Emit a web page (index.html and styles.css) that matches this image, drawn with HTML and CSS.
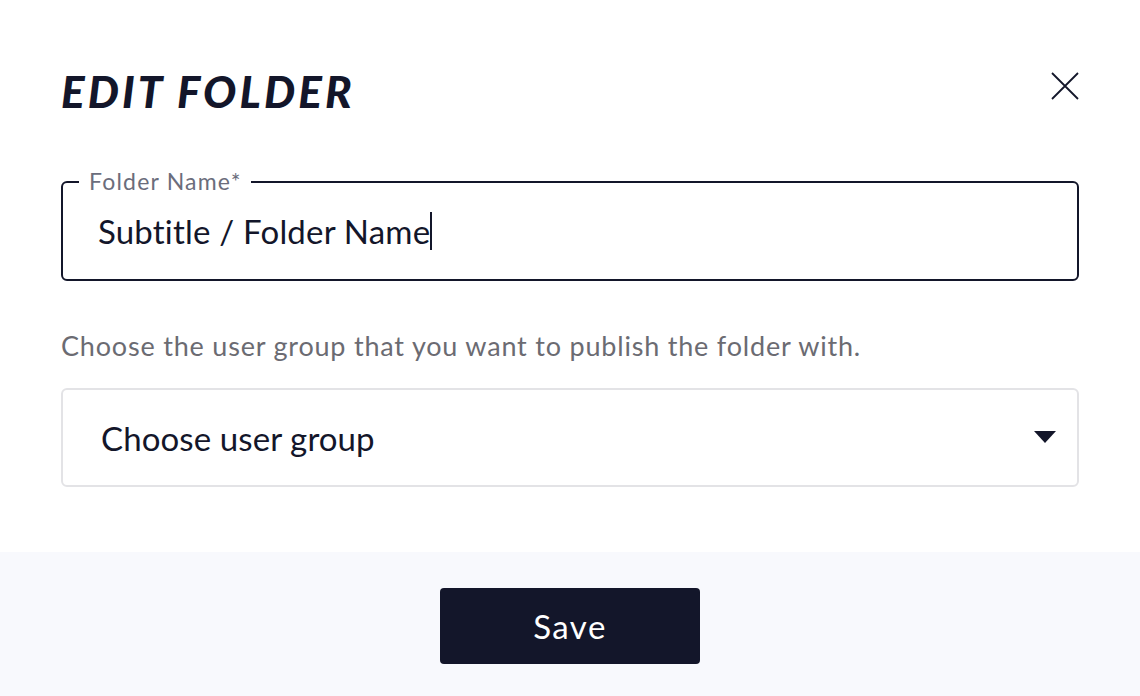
FILE: index.html
```html
<!DOCTYPE html>
<html lang="en">
<head>
<meta charset="utf-8">
<title>Edit Folder</title>
<link rel="stylesheet" href="styles.css">
</head>
<body>
<div class="dialog">
  <div class="content">
    <header class="header">
      <h1 class="title">EDIT FOLDER</h1>
      <button class="close" aria-label="Close">
        <svg width="28" height="28" viewBox="0 0 28 28"><path d="M1 1 L27 27 M27 1 L1 27" stroke="#13162a" stroke-width="1.8" fill="none"/></svg>
      </button>
    </header>
    <div class="field">
      <span class="field-label">Folder Name*</span>
      <div class="field-value">Subtitle / Folder Name<span class="caret"></span></div>
    </div>
    <p class="helper">Choose the user group that you want to publish the folder with.</p>
    <div class="select">
      <span class="select-text">Choose user group</span>
      <svg class="arrow" width="22" height="12" viewBox="0 0 22 12"><path d="M0 0 H22 L11 12 Z" fill="#13162a"/></svg>
    </div>
  </div>
  <footer class="footer">
    <button class="save">Save</button>
  </footer>
</div>
</body>
</html>
```
FILE: styles.css
```css
* { box-sizing: border-box; }
html, body { margin: 0; padding: 0; background: #fff; }
body { font-family: "Lato", "Noto Sans", sans-serif; color: #13162a; }
.dialog { width: 1140px; height: 696px; display: flex; flex-direction: column; }
.content { flex: 1; padding: 0 61px; }
.header { display: flex; justify-content: space-between; align-items: center; padding-top: 60px; height: 122px; }
.title { margin: 0; font-size: 44px; line-height: 62px; font-weight: 900; font-style: italic; letter-spacing: 3.1px; color: #13162a; }
.close { background: none; border: 0; padding: 0; width: 28px; height: 28px; display: flex; align-items: center; justify-content: center; margin-top: -10px; }
.field { position: relative; margin-top: 59px; height: 100px; border: 2px solid #13162a; border-radius: 6px; display: flex; align-items: center; padding-left: 35px; }
.field-label { position: absolute; left: 16px; top: -15px; background: #fff; padding: 0 9px 0 10px; font-size: 23px; line-height: 26px; letter-spacing: 1.2px; color: #6b6d7c; }
.field-value { font-size: 33px; line-height: 40px; letter-spacing: 0.2px; color: #13162a; display: flex; align-items: center; }
.caret { display: inline-block; width: 2px; height: 38px; background: #13162a; margin-left: 0; }
.helper { margin: 49px 0 0; font-size: 27px; line-height: 32px; letter-spacing: 0.8px; color: #6b6b72; }
.select { margin-top: 26px; height: 99px; border: 2px solid #e3e3e6; border-radius: 6px; display: flex; align-items: center; justify-content: space-between; padding: 0 21px 0 38px; }
.select-text { font-size: 33px; letter-spacing: 0.1px; color: #13162a; }
.arrow { margin-top: -2px; }
.footer { height: 144px; background: #f8f9fd; display: flex; justify-content: center; padding-top: 36px; }
.save { width: 260px; height: 76px; background: #13162a; color: #fff; border: 0; border-radius: 4px; font-family: "Lato", "Noto Sans", sans-serif; font-size: 33px; letter-spacing: 1.5px; }
```
